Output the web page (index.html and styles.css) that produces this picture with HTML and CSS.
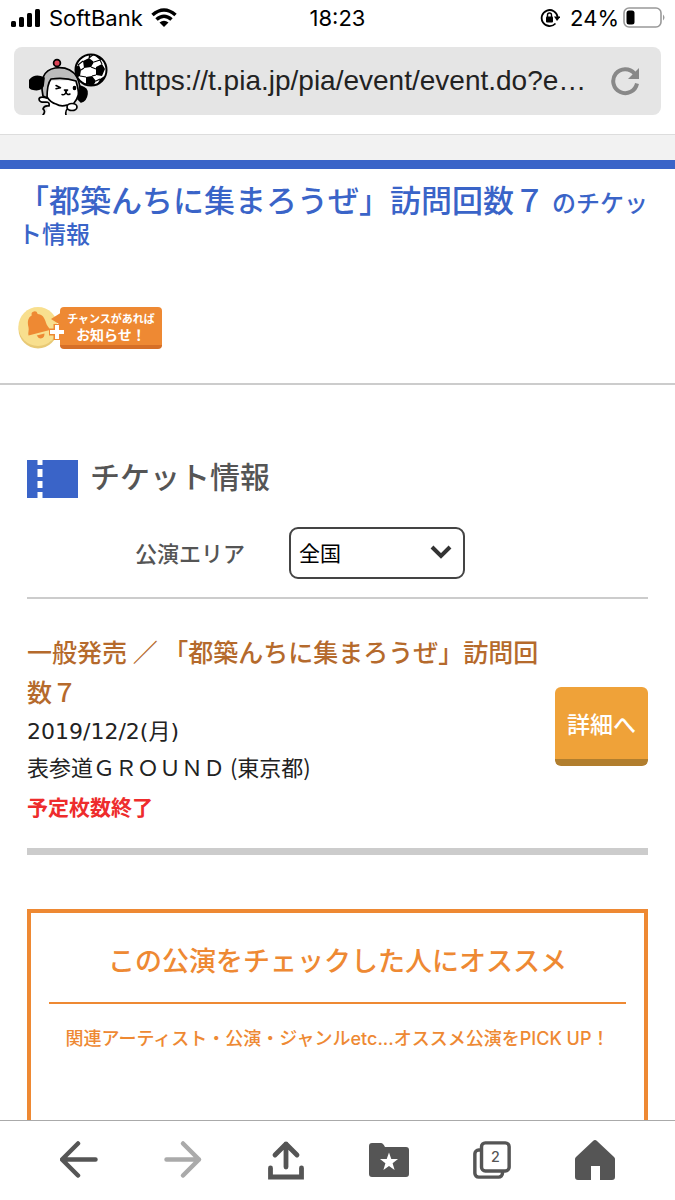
FILE: index.html
```html
<!DOCTYPE html>
<html lang="ja">
<head>
<meta charset="utf-8">
<meta name="viewport" content="width=device-width, initial-scale=1">
<title>チケット情報</title>
<link rel="stylesheet" href="styles.css">
</head>
<body>
<header class="browser-top">
  <div class="status">
    <div class="status-left">
      <svg class="signal" viewBox="0 0 30 20" aria-hidden="true"><rect x="0" y="13" width="5" height="6" rx="1.5"/><rect x="8" y="9" width="5" height="10" rx="1.5"/><rect x="16" y="5" width="5" height="14" rx="1.5"/><rect x="24" y="1" width="5" height="18" rx="1.5"/></svg>
      <span>SoftBank</span>
      <svg class="wifi" viewBox="0 0 26 20" aria-hidden="true"><path d="M1.500 7Q13-3 24.500 7M5.500 11.500Q13 5 20.500 11.500" fill="none" stroke="#000" stroke-width="3.600"/><path d="M8.500 14.500Q13 11 17.500 14.500L13 19Z"/></svg>
    </div>
    <span class="clock">18:23</span>
    <div class="status-right">
      <svg class="lock" viewBox="0 0 20 20" aria-hidden="true"><path d="M15.500 15.500A8 8 0 1 1 17.600 9" fill="none" stroke="#000" stroke-width="1.800"/><path d="M14 8.500h6.500L17 13Z"/><rect x="6" y="8.500" width="7" height="6" rx="1"/><path d="M7.500 9V7a2 2 0 0 1 4 0v2" fill="none" stroke="#000" stroke-width="1.400"/></svg>
      <span>24%</span>
      <svg class="battery" viewBox="0 0 43 22" aria-hidden="true"><rect x="1" y="1" width="37" height="19" rx="5" fill="none" stroke="#999" stroke-width="1.600"/><path d="M40 7.500q3 3 0 6z" fill="#999"/><rect x="3.500" y="3.500" width="8" height="14" rx="2.500"/></svg>
    </div>
  </div>
  <div class="address">
    <svg class="mascot" viewBox="0 0 80 64" aria-hidden="true">
      <clipPath id="ball"><circle cx="62" cy="19" r="15.500"/></clipPath>
      <g stroke="#000" stroke-width="1.700" stroke-linejoin="round" stroke-linecap="round">
        <path d="M51 35q8 2 7 8q-1 7-6 8l-3-3z" fill="#000"/>
        <path d="M20 30L18 47Q12 45 10 49Q11 52 16 51L20 54L16 64H38L39 58Q43 62 47 57Q49 53 45 52Q50 47 50 40L48 29Z" fill="#fff" stroke="none"/>
        <path d="M18 46q4 6 9 7Q32 56 38 54M50 35q1 10-5 17" fill="none"/>
        <path d="M14 45Q9 20 26 17Q41 15 48 26Q51 33 51 38L50 45Q49 36 47 30Q36 26 22 28Q18 33 18 47Z" fill="#bcbcbc"/>
        <path d="M15 27Q6 23 1 29Q-2 36 3 38Q12 40 14 35Z" fill="#000"/>
        <circle cx="28" cy="12" r="3.400" fill="#dc4457"/>
        <path d="M18 47Q11 45 10 48Q10 52 17 51Q21 51 20 55Q15 54 14 58Q17 60 14 64M39 57Q36 60 37 64" fill="none"/>
        <ellipse cx="43" cy="56" rx="5" ry="3.500" fill="#fff"/>
        <path d="M27 34.500l4.500 2.200-4.500 1M37 41q-1 3.500-4 2.500M37 41q1 3.500 4 2" fill="none" stroke-width="1.500"/>
        <path d="M35.500 39h3l-1.500 1.500z"/>
        <ellipse cx="45.500" cy="37" rx="1" ry="1.500"/>
      </g>
      <circle cx="62" cy="19" r="15.500" fill="#fff"/>
      <g clip-path="url(#ball)">
        <path d="M54 10l6-3 5 4-3 5-7 1zM67 16l6-3 3 5-3 7-6-1zM57 26l6-1 4 5-3 5-7-2zM45 17l5-3 2 5-1 6-6 3zM71 28l6-4v10h-9zM64 3l6-1 6 6-5 1z"/>
        <path d="M60 7l5-4M65 11l6-2M62 16l5 2M55 17l-3 2M67 24l-4 1M57 26l-6-1M67 30l4-2M73 13l-2-4M54 10l-5 4M57 33l-7-2M60 7l1-4" fill="none" stroke="#000" stroke-width="1.100"/>
      </g>
      <circle cx="62" cy="19" r="15.500" fill="none" stroke="#000" stroke-width="2"/>
    </svg>
    <input class="url" type="text" aria-label="アドレス" value="https://t.pia.jp/pia/event/event.do?e…">
    <button class="icon-btn" type="button" aria-label="再読み込み"><svg class="reload" viewBox="0 0 30 30"><path d="M24.500 7.500A12 12 0 1 0 27 17.500" fill="none" stroke="#888" stroke-width="4"/><path d="M29 2v11H18Z" fill="#888"/></svg></button>
  </div>
</header>
<div class="strip"></div>
<main>
  <section class="intro">
    <h1>「都築んちに集まろうぜ」訪問回数７ <small>のチケット情報</small></h1>
    <a class="notify" href="#">
      <svg class="bell" viewBox="0 0 48 42" aria-hidden="true"><circle cx="20" cy="22" r="19.500" fill="#e8c975"/><circle cx="20" cy="19.500" r="19.500" fill="#f8df8e"/><g transform="rotate(-14 19 17)" fill="#ee8933"><circle cx="19" cy="7" r="3"/><path d="M19 7c-7 0-9 5-9 11 0 3-2 5-2 8h22c0-3-2-5-2-8 0-6-2-11-9-11z"/><path d="M16 28h8q-1 4-4 4t-4-4z"/></g><path d="M44 5v14L33 12Z" fill="#ee8933"/><path d="M39 17v16M31 25h16" stroke="#ee8933" stroke-width="7"/><path d="M39 18v14M32 25h14" stroke="#fff" stroke-width="4"/></svg>
      <span class="notify-label"><span class="notify-small">チャンスがあれば</span><span>お知らせ！</span></span>
    </a>
  </section>
  <section class="tickets">
    <h2><svg class="ticket" viewBox="0 0 51 38" aria-hidden="true"><path fill="#3a64c8" d="M0 0h51v38H0z"/><path d="M13 0v5M13 9v8M13 21v7M13 32v6" stroke="#fff" stroke-width="5"/></svg>チケット情報</h2>
    <div class="filter">
      <label for="area">公演エリア</label>
      <div class="select-wrap"><select id="area"><option>全国</option></select><svg class="chevron" viewBox="0 0 22 16" aria-hidden="true"><path d="M2 3l9 9 9-9" fill="none" stroke="#333" stroke-width="4"/></svg></div>
    </div>
    <article class="event">
      <div class="event-text">
        <h3>一般発売 ／ 「都築んちに集まろうぜ」訪問回数７</h3>
        <p class="date">2019/12/2(月)</p>
        <p>表参道ＧＲＯＵＮＤ (東京都)</p>
        <p class="ended">予定枚数終了</p>
      </div>
      <button class="detail" type="button">詳細へ</button>
    </article>
    <section class="recommend">
      <h2 class="recommend-title">この公演をチェックした人にオススメ</h2>
      <p>関連アーティスト・公演・ジャンルetc...オススメ公演をPICK UP！</p>
    </section>
  </section>
</main>
<nav class="toolbar" aria-label="ブラウザ">
  <button type="button" aria-label="戻る"><svg viewBox="0 0 40 40"><path d="M35.500 19.500H3M18 3.500L2 19.500l16 16" fill="none" stroke="#555" stroke-width="4.500" stroke-linecap="round" stroke-linejoin="round"/></svg></button>
  <button type="button" aria-label="進む"><svg viewBox="0 0 40 40"><path d="M3.500 19.500H36M20 3.500l16 16-16 16" fill="none" stroke="#aaa" stroke-width="4.500" stroke-linecap="round" stroke-linejoin="round"/></svg></button>
  <button type="button" aria-label="共有"><svg viewBox="0 0 40 40"><path d="M20 27V4M9 15L20 4l11 11" fill="none" stroke="#555" stroke-width="4.800" stroke-linecap="round" stroke-linejoin="round"/><path d="M4.500 28v9h31v-9" fill="none" stroke="#555" stroke-width="4.800" stroke-linecap="round"/></svg></button>
  <button type="button" aria-label="ブックマーク"><svg viewBox="0 0 40 40"><path d="M3 3h9q2 0 4 4h21q3 0 3 3v24q0 3-3 3H3q-3 0-3-3V6q0-3 3-3z" fill="#555"/><path d="M20 12.500l2.300 6.500h6.700l-5.400 4.200 2 6.800-5.600-4-5.600 4 2-6.800-5.400-4.200h6.700z" fill="#fff"/></svg></button>
  <button type="button" aria-label="タブ 2"><svg viewBox="0 0 42 40"><rect x="3" y="9.500" width="29" height="28.500" rx="4" fill="#fff" stroke="#555" stroke-width="3.600"/><rect x="10" y="2" width="29" height="29.500" rx="4" fill="#fff" stroke="#555" stroke-width="3.600"/><text x="24.500" y="22" text-anchor="middle" class="tab-count">2</text></svg></button>
  <button type="button" aria-label="ホーム"><svg viewBox="0 0 40 40"><path d="M20 0q1 0 2 1l17 16q1 1 1 2v18q0 3-3 3H25V26h-9v14H3q-3 0-3-3V19q0-1 1-2L18 1q1-1 2-1z" fill="#555"/></svg></button>
</nav>
</body>
</html>
```
FILE: styles.css
```css
* { box-sizing: border-box; }

body {
  margin: 0;
  height: 100vh;
  display: flex;
  flex-direction: column;
  background: #fff;
  color: #222;
  font-family: "Noto Sans CJK JP", sans-serif;
}

h1, h2, h3, p { margin: 0; }
button { border: 0; padding: 0; background: none; font: inherit; }
svg { display: block; }

.browser-top { flex: none; padding: 6px 14px 19px; }

.status {
  display: grid;
  grid-template-columns: 1fr auto 1fr;
  align-items: center;
  height: 24px;
  font: 400 22px/24px Inter, sans-serif;
  color: #000;
}
.status-left, .status-right { display: flex; align-items: center; gap: 8px; }
.status-left { margin-left: -3px; }
.status-right { justify-content: flex-end; gap: 4px; margin-right: -5px; }
.signal { width: 30px; height: 20px; }
.wifi { width: 26px; height: 20px; }
.lock { width: 20px; height: 20px; margin-right: 6px; }
.battery { width: 43px; height: 22px; }

.address {
  display: flex;
  align-items: center;
  height: 68px;
  margin-top: 17px;
  padding: 0 21px 0 15px;
  border-radius: 8px;
  background: #e5e5e5;
}
.mascot { flex: none; width: 80px; height: 64px; align-self: flex-end; }
.url {
  flex: 1;
  min-width: 0;
  border: 0;
  padding: 0 0 0 15px;
  background: none;
  color: #222;
  font: 28px/32px "Liberation Sans", Arial, sans-serif;
}
.reload { width: 30px; height: 30px; }

.strip {
  flex: none;
  height: 35px;
  border-top: 1px solid #ddd;
  border-bottom: 9px solid #3a64c8;
  background: #f2f2f2;
}

main { flex: 1; min-height: 0; overflow: hidden; }

.intro {
  height: 216px;
  padding: 16px 18px 0;
  border-bottom: 2px solid #ccc;
}
h1 { color: #3a64c8; font-size: 31px; line-height: 28px; font-weight: 500; }
h1 small { font-size: 24px; }

.notify {
  display: flex;
  width: fit-content;
  margin-top: 60px;
  text-decoration: none;
  color: #fff;
}
.bell { position: relative; z-index: 1; width: 48px; height: 42px; margin-right: -6px; }
.notify-label {
  display: flex;
  flex-direction: column;
  align-items: center;
  width: 102px;
  height: 42px;
  padding-top: 3px;
  border-radius: 4px;
  border-bottom: 4px solid #d66f27;
  background: #ee8933;
  font-size: 14px;
  line-height: 16px;
  font-weight: 700;
}
.notify-small { font-size: 11px; line-height: 16px; }

.tickets { padding: 67px 27px 0; }
h2 {
  display: flex;
  align-items: center;
  gap: 12px;
  color: #555;
  font-size: 30px;
  line-height: 46px;
  font-weight: 500;
}
.ticket { width: 51px; height: 38px; margin-top: 8px; }

.filter {
  display: flex;
  align-items: center;
  justify-content: center;
  gap: 44px;
  padding: 29px 75px 18px 0;
  border-bottom: 2px solid #ccc;
}
.filter label { padding-bottom: 3px; color: #555; font-size: 22px; font-weight: 500; }
.select-wrap { position: relative; width: 176px; }
select {
  appearance: none;
  display: block;
  width: 100%;
  height: 52px;
  padding: 0 8px 2px;
  border: 2px solid #444;
  border-radius: 9px;
  background: #fff;
  color: #000;
  font: 21px "Noto Sans CJK JP", sans-serif;
}
.chevron { position: absolute; right: 13px; top: 17px; width: 22px; height: 16px; pointer-events: none; }

.event {
  display: flex;
  align-items: center;
  justify-content: space-between;
  gap: 6px;
  padding: 32px 0 24px;
  border-bottom: 7px solid #ccc;
}
.event h3 { margin-bottom: 3px; color: #b56a2c; font-size: 25px; line-height: 40px; font-weight: 500; }
.event p { font-size: 22px; line-height: 35px; }
.event .date { font-family: "DejaVu Sans", "Noto Sans CJK JP", sans-serif; }
.event .ended { margin-top: 5px; color: #ee2c2c; font-size: 21px; font-weight: 700; }
.detail {
  flex: none;
  width: 93px;
  height: 79px;
  margin-bottom: 2px;
  border-bottom: 7px solid #b17e2e;
  border-radius: 6px;
  background: #efa239;
  color: #fff;
  font-size: 23px;
  font-weight: 500;
}

.recommend {
  height: 300px;
  margin-top: 54px;
  padding: 26px 18px 0;
  border: 4px solid #ee8933;
  color: #ee8933;
  font-weight: 500;
  text-align: center;
}
.recommend-title {
  justify-content: center;
  padding-bottom: 21px;
  border-bottom: 2px solid #ee8933;
  color: inherit;
  font-size: 27px;
  line-height: 42px;
}
.recommend p {
  margin-top: 21px;
  font-family: Inter, "Noto Sans CJK JP", sans-serif;
  font-size: 18px;
  line-height: 28px;
}

.toolbar {
  flex: none;
  display: flex;
  justify-content: space-between;
  padding: 19px 60px 20px;
  border-top: 1px solid #aaa;
  background: #fff;
}
.toolbar svg { width: 40px; height: 40px; }
.tab-count { fill: #555; font: 500 15px Inter, sans-serif; }
```
